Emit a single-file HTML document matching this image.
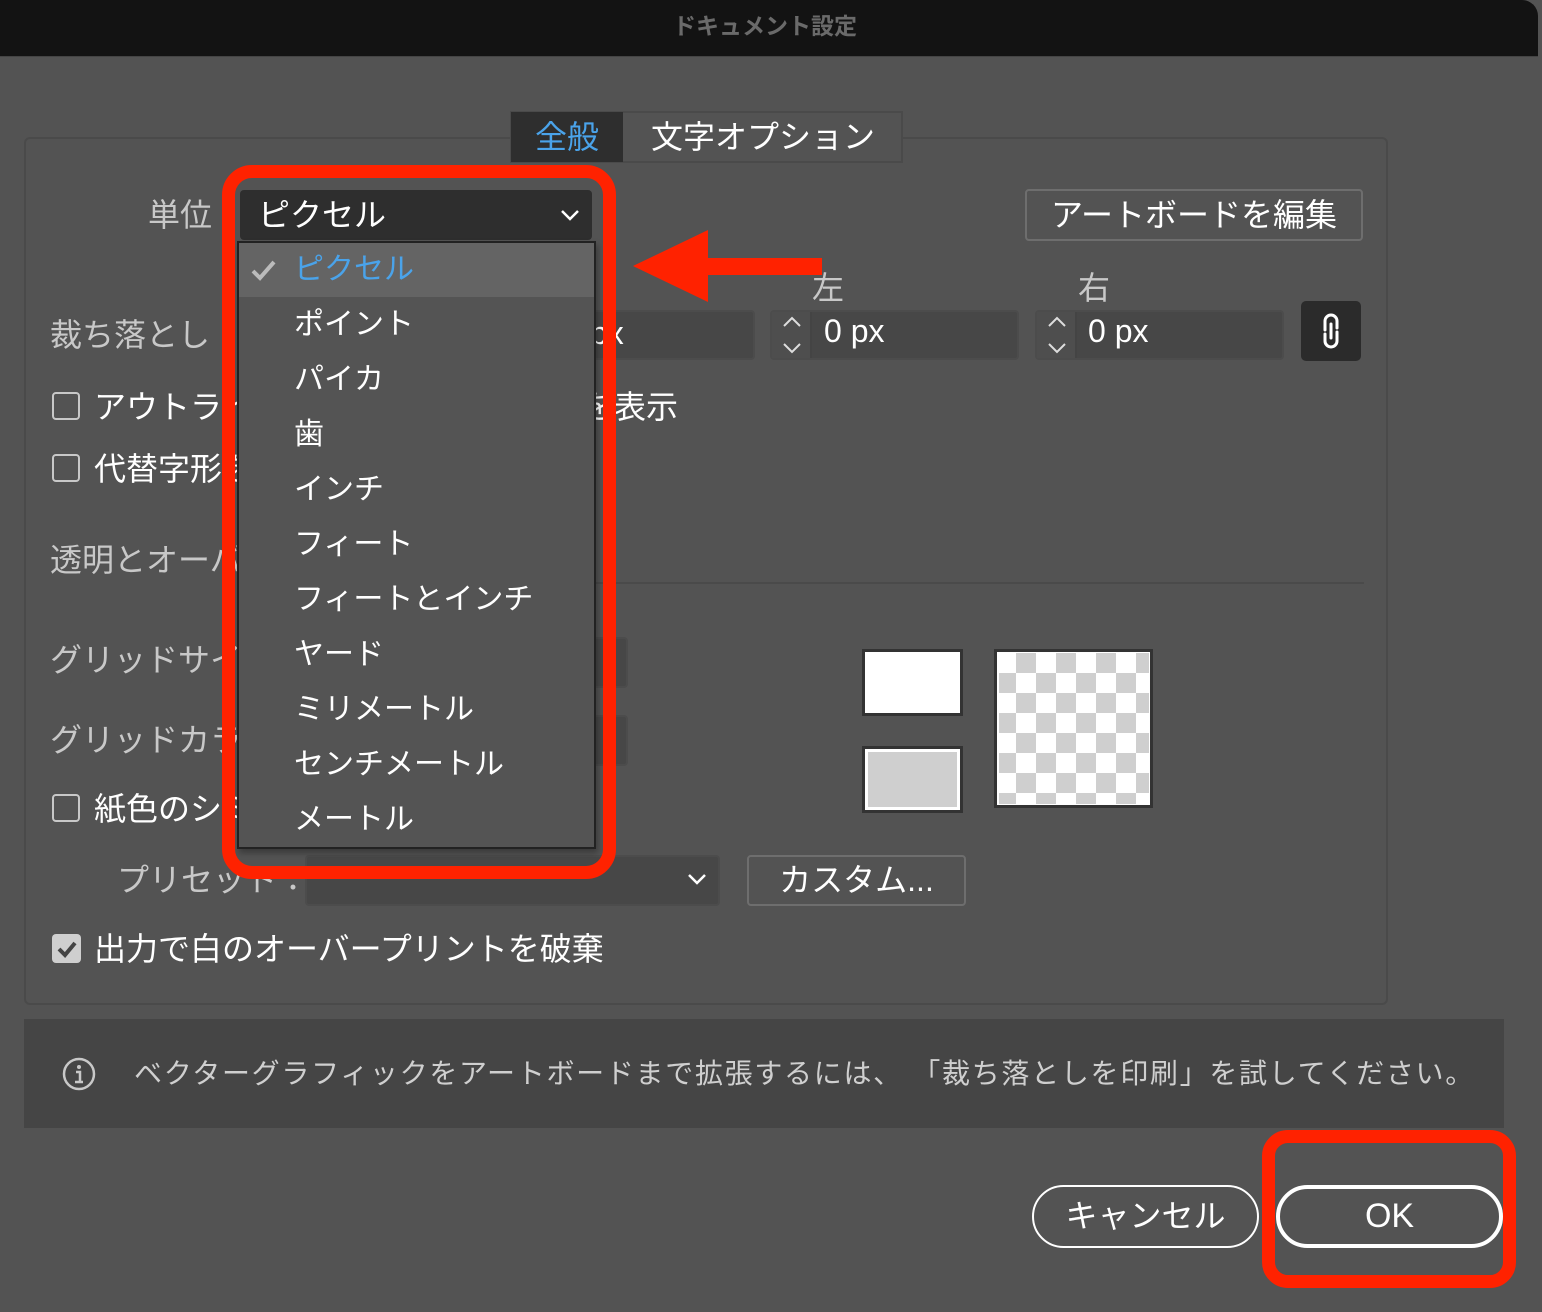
<!DOCTYPE html>
<html><head><meta charset="utf-8"><style>
*{box-sizing:border-box;margin:0;padding:0}
body{width:1542px;height:1312px;background:#535353;position:relative;overflow:hidden;font-family:"Liberation Sans","Noto Sans CJK JP",sans-serif;color:#fff}
.a{position:absolute;white-space:nowrap}
.lbl{color:#c8c8c8;font-size:32px;line-height:40px}
.t{font-size:32px;line-height:40px;color:#fff}
.cb{position:absolute;width:28px;height:28px;border:2px solid #c8c8c8;border-radius:4px}
.inp{position:absolute;background:#474747;border:2px solid #4c4c4c;border-radius:4px}
.btn{position:absolute;border:2px solid #6e6e6e;border-radius:4px;font-size:32px;line-height:46px;text-align:center;color:#fff}
.mi{position:absolute;left:294px;font-size:30px;line-height:40px;color:#fff;white-space:nowrap}
</style></head><body>
<div class="a" style="left:0;top:0;width:1538px;height:57px;background:#131313;border-top-right-radius:16px;border-bottom:1px solid #444"></div>
<div class="a" style="left:0;top:10px;width:1530px;text-align:center;font-size:23px;font-weight:bold;color:#6a6a6a;line-height:32px">ドキュメント設定</div>

<div class="a" style="left:24px;top:137px;width:1364px;height:868px;border:2px solid #4a4a4a;border-radius:6px"></div>

<div class="a" style="left:510px;top:111px;width:393px;height:52px;border:2px solid #4a4a4a;background:#535353"></div>
<div class="a" style="left:511px;top:112px;width:112px;height:50px;background:#2e2e2e;color:#4aa3ea;font-size:32px;line-height:50px;text-align:center">全般</div>
<div class="a t" style="left:651px;top:117px">文字オプション</div>

<div class="a lbl" style="left:148px;top:195px">単位</div>
<div class="btn" style="left:1025px;top:189px;width:338px;height:52px;line-height:48px">アートボードを編集</div>

<div class="a lbl" style="left:812px;top:268px">左</div>
<div class="a lbl" style="left:1078px;top:268px">右</div>
<div class="a lbl" style="left:50px;top:315px">裁ち落とし</div>

<div class="inp" style="left:560px;top:310px;width:195px;height:50px"></div>
<div class="a t" style="left:590px;top:313px">px</div>
<div class="inp" style="left:770px;top:310px;width:249px;height:50px"></div>
<div class="a" style="left:772px;top:312px;width:40px;height:46px;background:#4e4e4e;border-right:2px solid #444"></div>
<svg class="a" style="left:780px;top:314px" width="24" height="42"><path d="M4 12 L12 4 L20 12 M4 30 L12 38 L20 30" fill="none" stroke="#ddd" stroke-width="2"/></svg>
<div class="a t" style="left:824px;top:311px">0 px</div>
<div class="inp" style="left:1035px;top:310px;width:249px;height:50px"></div>
<div class="a" style="left:1037px;top:312px;width:40px;height:46px;background:#4e4e4e;border-right:2px solid #444"></div>
<svg class="a" style="left:1045px;top:314px" width="24" height="42"><path d="M4 12 L12 4 L20 12 M4 30 L12 38 L20 30" fill="none" stroke="#ddd" stroke-width="2"/></svg>
<div class="a t" style="left:1088px;top:311px">0 px</div>
<div class="a" style="left:1301px;top:301px;width:60px;height:60px;background:#2b2b2b;border-radius:5px"></div>
<svg class="a" style="left:1316px;top:310px" width="30" height="42" viewBox="0 0 30 42"><path d="M9 20 V11 a6 6 0 0 1 12 0 V18 M21 22 V31 a6 6 0 0 1 -12 0 V24 M15 14 V28" fill="none" stroke="#fff" stroke-width="3" stroke-linecap="round"/></svg>

<div class="cb" style="left:52px;top:392px"></div>
<div class="a t" style="left:94px;top:387px">アウトライン化されたテキスト</div>
<div class="a t" style="left:582px;top:387px">を表示</div>
<div class="cb" style="left:52px;top:454px"></div>
<div class="a t" style="left:94px;top:449px">代替字形をハイライト</div>
<div class="a lbl" style="left:50px;top:540px">透明とオーバープリントのオプション</div>
<div class="a" style="left:240px;top:582px;width:1124px;height:2px;background:#4a4a4a"></div>
<div class="a lbl" style="left:50px;top:640px">グリッドサイズ：</div>
<div class="inp" style="left:420px;top:637px;width:208px;height:51px"></div>
<div class="a lbl" style="left:50px;top:720px">グリッドカラー：</div>
<div class="inp" style="left:420px;top:715px;width:208px;height:51px"></div>
<div class="cb" style="left:52px;top:794px"></div>
<div class="a t" style="left:94px;top:789px">紙色のシミュレート</div>
<div class="a lbl" style="left:117px;top:860px">プリセット：</div>
<div class="inp" style="left:305px;top:855px;width:415px;height:51px"></div>
<svg class="a" style="left:686px;top:872px" width="22" height="14"><path d="M3 3 L11 11 L19 3" fill="none" stroke="#fff" stroke-width="2.5"/></svg>
<div class="btn" style="left:747px;top:855px;width:219px;height:51px">カスタム...</div>
<div class="a" style="left:52px;top:934px;width:29px;height:29px;background:#cfcfcf;border-radius:4px"></div>
<svg class="a" style="left:55px;top:938px" width="24" height="22"><path d="M4 11 L10 17 L20 5" fill="none" stroke="#444" stroke-width="4"/></svg>
<div class="a t" style="left:94px;top:929px">出力で白のオーバープリントを破棄</div>

<div class="a" style="left:862px;top:649px;width:101px;height:67px;background:#fff;border:3px solid #333"></div>
<div class="a" style="left:862px;top:746px;width:101px;height:67px;background:#cfcfcf;border:3px solid #333;box-shadow:inset 0 0 0 3px #fff"></div>
<div class="a" style="left:994px;top:649px;width:159px;height:159px;border:3px solid #333;background:#fff"></div>
<div class="a" style="left:999px;top:653px;width:150px;height:151px;background:conic-gradient(#cfcfcf 0 25%,#fff 0 50%,#cfcfcf 0 75%,#fff 0) -3px 0/40px 40px"></div>

<div class="a" style="left:24px;top:1019px;width:1480px;height:109px;background:#454545"></div>
<svg class="a" style="left:61px;top:1056px" width="36" height="36"><circle cx="18" cy="18" r="15" fill="none" stroke="#c8c8c8" stroke-width="2.5"/><circle cx="18" cy="11" r="2" fill="#c8c8c8"/><path d="M15 16 h4 v10 M14 26 h8" stroke="#c8c8c8" stroke-width="2.5" fill="none"/></svg>
<div class="a" style="left:134px;top:1056px;font-size:28px;line-height:36px;color:#cfcfcf;letter-spacing:1.7px">ベクターグラフィックをアートボードまで拡張するには、 「裁ち落としを印刷」を試してください。</div>

<div class="a" style="left:1032px;top:1185px;width:227px;height:63px;border:2px solid #fff;border-radius:32px;font-size:32px;line-height:58px;text-align:center">キャンセル</div>
<div class="a" style="left:1276px;top:1185px;width:227px;height:63px;border:4px solid #fff;border-radius:32px;font-size:34px;line-height:55px;text-align:center">OK</div>
<div class="a" style="left:1262px;top:1130px;width:254px;height:158px;border:13px solid #ff2200;border-radius:26px"></div>

<div class="a" style="left:240px;top:190px;width:352px;height:50px;background:#2e2e2e;border-radius:4px"></div>
<div class="a t" style="left:258px;top:195px">ピクセル</div>
<svg class="a" style="left:559px;top:208px" width="22" height="14"><path d="M3 3 L11 11 L19 3" fill="none" stroke="#fff" stroke-width="2.5"/></svg>
<div class="a" style="left:237px;top:241px;width:359px;height:608px;background:#545454;border:2px solid #222;box-shadow:2px 4px 6px rgba(0,0,0,.3)"></div>
<div class="a" style="left:239px;top:243px;width:355px;height:54px;background:#646464"></div>
<svg class="a" style="left:250px;top:258px" width="28" height="24"><path d="M3 13 L10 20 L24 4" fill="none" stroke="#bbb" stroke-width="4"/></svg>
<div class="mi" style="top:250px;color:#4aa3ea">ピクセル</div>
<div class="mi" style="top:305px">ポイント</div>
<div class="mi" style="top:360px">パイカ</div>
<div class="mi" style="top:415px">歯</div>
<div class="mi" style="top:470px">インチ</div>
<div class="mi" style="top:525px">フィート</div>
<div class="mi" style="top:580px">フィートとインチ</div>
<div class="mi" style="top:635px">ヤード</div>
<div class="mi" style="top:690px">ミリメートル</div>
<div class="mi" style="top:745px">センチメートル</div>
<div class="mi" style="top:800px">メートル</div>

<div class="a" style="left:222px;top:165px;width:394px;height:714px;border:13px solid #ff2200;border-radius:30px"></div>
<svg class="a" style="left:620px;top:220px" width="210" height="95"><path d="M13 46 L88 10 L88 38 L202 38 L202 55 L88 55 L88 82 Z" fill="#ff2200"/></svg>
</body></html>
